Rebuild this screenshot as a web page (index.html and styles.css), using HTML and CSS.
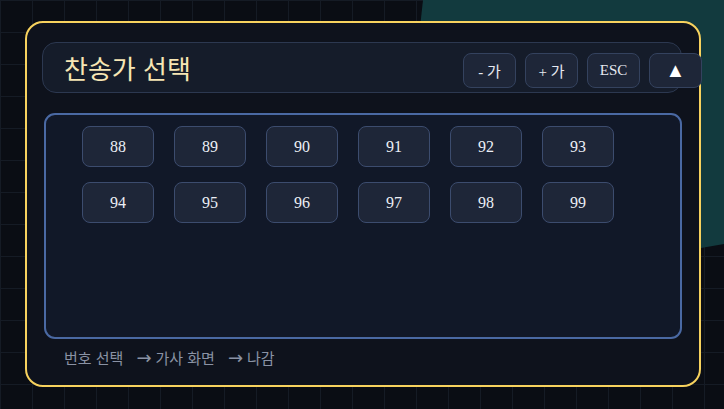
FILE: index.html
```html
<!DOCTYPE html>
<html lang="ko">
<head>
  <meta charset="UTF-8" />
  <title>찬송가 선택</title>
  <meta name="viewport" content="width=device-width, initial-scale=1" />
  <link rel="stylesheet" href="styles.css">
</head>
<body>

  <div class="backdrop-shape"></div>

  <main class="picker">
    <header class="picker-header">
      <h1>찬송가 선택</h1>
      <div class="tools">
        <button class="tool">- 가</button>
        <button class="tool">+ 가</button>
        <button class="tool">ESC</button>
        <button class="tool tool-up">▲</button>
      </div>
    </header>

    <section class="number-box">
      <div class="number-grid" id="numberGrid"></div>
    </section>

    <p class="hint">번호 선택<span class="arrow">→</span>가사 화면<span class="arrow">→</span>나감</p>
  </main>

  <script>
    const grid = document.getElementById('numberGrid');
    for (let n = 88; n <= 99; n++) {
      const btn = document.createElement('button');
      btn.className = 'num';
      btn.textContent = n;
      grid.appendChild(btn);
    }
  </script>

</body>
</html>
```

FILE: styles.css
```css
/* Reset and base */
* {
  box-sizing: border-box;
  margin: 0;
  padding: 0;
}
html, body {
  height: 100%;
}
body {
  font-family: 'Liberation Serif', 'Noto Sans CJK KR', serif;
  background-color: #0a0d14;
  background-image:
    linear-gradient(to right, #151b25 1px, transparent 1px),
    linear-gradient(to bottom, #151b25 1px, transparent 1px);
  background-size: 32px 32px;
  background-position: 0 0;
  overflow: hidden;
  position: relative;
  padding: 21px 0 0 25px;
}

/* Teal tilted square behind the panel */
.backdrop-shape {
  position: absolute;
  inset: 0;
  background: #123a3e;
  clip-path: polygon(423px 0, 724px 0, 724px 244px, 701px 248px, 390px 302px);
  z-index: 0;
}

/* Main panel */
.picker {
  position: relative;
  z-index: 1;
  width: 676px;
  height: 366px;
  background: #0e121c;
  border: 2px solid #f7d25e;
  border-radius: 18px;
  padding: 19px 17px 0 15px;
}

/* Header bar */
.picker-header {
  display: flex;
  align-items: center;
  height: 51px;
  background: #151c2a;
  border: 1px solid #2c3850;
  border-radius: 14px;
  padding: 5px 0 0 21px;
}
.picker-header h1 {
  flex-grow: 1;
  font-family: 'Noto Sans CJK KR', sans-serif;
  font-weight: 400;
  font-size: 26px;
  color: #f7e6b4;
  margin-top: -6px;
}
.tools {
  display: flex;
  gap: 9px;
  margin-right: -21px;
}
.tool {
  width: 53px;
  height: 35px;
  background: #1e2638;
  border: 1px solid #34425e;
  border-radius: 8px;
  color: #e6e9f0;
  font-family: 'Liberation Serif', 'Noto Sans CJK KR', serif;
  font-size: 15px;
  cursor: pointer;
}
.tool-up {
  color: #ffffff;
  font-size: 20px;
  line-height: 1;
}

/* Number selection box */
.number-box {
  margin: 20px 0 0 2px;
  height: 226px;
  background: #111828;
  border: 2px solid #4a69a3;
  border-radius: 11px;
  padding: 11px 0 0 36px;
}
.number-grid {
  display: grid;
  grid-template-columns: repeat(6, 72px);
  grid-auto-rows: 41px;
  column-gap: 20px;
  row-gap: 15px;
}
.num {
  background: #1e2638;
  border: 1px solid #3c4c6e;
  border-radius: 8px;
  color: #eceff6;
  font-family: 'Liberation Serif', serif;
  font-size: 16px;
  cursor: pointer;
}

/* Footer hint */
.hint {
  margin: 8px 0 0 22px;
  font-family: 'Noto Sans CJK KR', sans-serif;
  font-size: 15px;
  color: #8a92a4;
}
.hint .arrow {
  font-family: 'DejaVu Sans', sans-serif;
  font-size: 18px;
  line-height: 1;
  margin: 0 4px 0 13px;
}
```
